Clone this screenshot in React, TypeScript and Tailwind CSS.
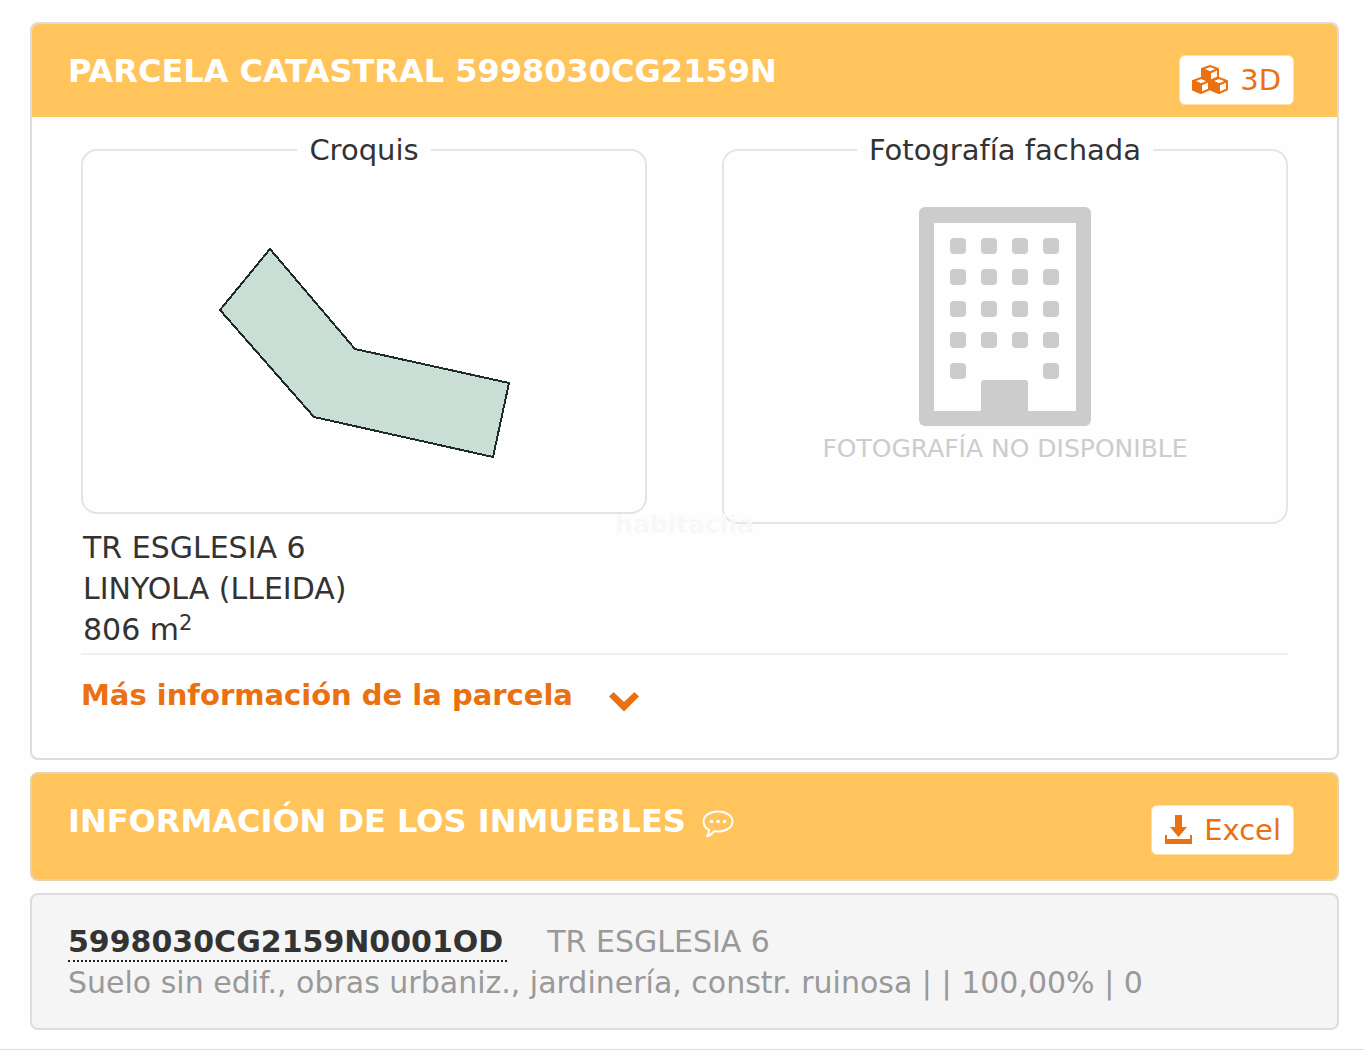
import type { ReactNode } from "react"

const windowColumns = [31, 62, 93, 124]
const windowRows = [31, 62, 94, 125]

function CubeIcon({ x, y }: { x: number; y: number }) {
  return (
    <g transform={`translate(${x} ${y})`} stroke="currentColor" strokeWidth="2" strokeLinejoin="round">
      <path d="M9 1 17 4v8.500L9 16 1 12.500V4Z" fill="white" />
      <path d="M1 4l8 3.500V16L1 12.500Z" fill="currentColor" />
      <path d="M1 4l8 3.500L17 4" fill="none" />
    </g>
  )
}

function CubesIcon() {
  return (
    <svg viewBox="0 0 36 30" className="h-[30px] w-9" aria-hidden="true">
      <CubeIcon x={9} y={0} />
      <CubeIcon x={0} y={12} />
      <CubeIcon x={18} y={12} />
    </svg>
  )
}

function DownloadIcon() {
  return (
    <svg viewBox="0 0 28 30" className="h-[30px] w-7" fill="currentColor" aria-hidden="true">
      <path d="M11 0h7v12h5L14.500 22 6 12h5Z" />
      <path d="M1 20h2v4h23v-4h2v9H1Z" />
    </svg>
  )
}

function CommentIcon() {
  return (
    <svg viewBox="0 0 32 28" className="mt-1 h-7 w-8" fill="none" stroke="currentColor" aria-hidden="true">
      <path
        d="M16 1.500c8.300 0 14.500 4.400 14.500 10S24.300 21.500 16 21.500c-1.300 0-2.600-.1-3.800-.4C10.300 23.600 8 25.500 5 26.200c1.300-1.700 2-3.700 2-6.200-3.500-1.800-5.500-5-5.500-8.500 0-5.600 6.200-10 14.500-10Z"
        strokeWidth="2"
        strokeLinejoin="round"
      />
      <g fill="currentColor" stroke="none">
        <circle cx="9.500" cy="11.500" r="1.800" />
        <circle cx="16" cy="11.500" r="1.800" />
        <circle cx="22.500" cy="11.500" r="1.800" />
      </g>
    </svg>
  )
}

function ChevronIcon() {
  return (
    <svg viewBox="0 0 30 20" className="mt-3 h-5 w-[30px]" fill="currentColor" aria-hidden="true">
      <path d="M4.500 0 15 10 25.500 0 30 4.500 15 19.500 0 4.500Z" />
    </svg>
  )
}

function ParcelSketch() {
  return (
    <svg viewBox="0 0 292 212" className="h-[212px] w-[292px]" role="img" aria-label="Croquis">
      <path
        d="M52 1 137 101 291 135 275 209 96 169 2 62Z"
        fill="#c9dfd5"
        stroke="#1f2b27"
        strokeWidth="2"
        strokeLinejoin="round"
        shapeRendering="crispEdges"
      />
    </svg>
  )
}

function BuildingIcon() {
  return (
    <svg viewBox="0 0 172 219" className="h-[219px] w-[172px]" fill="#cccccc" aria-hidden="true">
      <path
        fillRule="evenodd"
        d="M6 0h160a6 6 0 0 1 6 6v207a6 6 0 0 1-6 6H6a6 6 0 0 1-6-6V6a6 6 0 0 1 6-6ZM15 16v188h47v-28q0-3 3-3h41q3 0 3 3v28h48V16Z"
      />
      {windowRows.map((y) =>
        windowColumns.map((x) => <rect key={`${x}-${y}`} x={x} y={y} width="16" height="16" rx="4" />)
      )}
      <rect x="31" y="156" width="16" height="16" rx="4" />
      <rect x="124" y="156" width="16" height="16" rx="4" />
    </svg>
  )
}

function HeaderButton({ children }: { children: ReactNode }) {
  return (
    <button
      type="button"
      className="flex h-[50px] shrink-0 items-center gap-3 rounded-md border border-[#ffe0ad] bg-white px-3 text-[29px] leading-9 text-[#ea7010]"
    >
      {children}
    </button>
  )
}

function Frame({ title, className, children }: { title: string; className: string; children: ReactNode }) {
  return (
    <fieldset className={`min-w-0 rounded-2xl border-2 border-[#e4e4e4] ${className}`}>
      <legend className="mx-auto px-3 text-[29px] leading-9">{title}</legend>
      {children}
    </fieldset>
  )
}

export default function App() {
  return (
    <div className="border-b border-[#dddddd] bg-[#fefefe] pt-[22px] pr-[25px] pb-[19px] pl-[30px] font-['DejaVu_Sans',sans-serif] text-[30px] leading-[41px] text-[#333333]">
      <main className="flex flex-col gap-3">
        <section className="relative overflow-hidden rounded-lg border-2 border-[#dddddd]">
          <header className="flex h-[93px] items-start justify-between bg-[#ffc55c] pr-[43px] pl-9">
            <h1 className="pt-[27px] text-[32px] font-bold text-white">PARCELA CATASTRAL 5998030CG2159N</h1>
            <div className="pt-[31px]">
              <HeaderButton>
                <CubesIcon />
                3D
              </HeaderButton>
            </div>
          </header>

          <div className="px-[49px] pt-[15px] pb-[42px]">
            <div className="grid grid-cols-2 gap-[75px]">
              <div>
                <Frame title="Croquis" className="h-[382px]">
                  <div className="flex justify-center pt-20">
                    <ParcelSketch />
                  </div>
                </Frame>
                <address className="px-0.5 pt-[13px] not-italic">
                  <p>TR ESGLESIA 6</p>
                  <p>LINYOLA (LLEIDA)</p>
                  <p>
                    806 m<sup className="text-[21px]">2</sup>
                  </p>
                </address>
              </div>
              <Frame title="Fotografía fachada" className="h-[392px]">
                <div className="flex flex-col items-center pt-[39px] text-[25px] text-[#cccccc]">
                  <BuildingIcon />
                  <p className="pt-0.5">FOTOGRAFÍA NO DISPONIBLE</p>
                </div>
              </Frame>
            </div>
            <hr className="mt-[3px] border-t-2 border-[#f0f0f0]" />
            <a href="#parcela" className="mt-5 flex items-center gap-9 text-[29px] font-bold text-[#ea7010]">
              Más información de la parcela
              <ChevronIcon />
            </a>
          </div>
          <span className="absolute top-[480px] left-1/2 -translate-x-1/2 text-[25px] font-bold text-[#f8f8f8]">
            habitaclia
          </span>
        </section>

        <section className="flex h-[109px] items-start justify-between rounded-lg border-2 border-[#e6d3ad] bg-[#ffc55c] pr-[43px] pl-9">
          <h2 className="flex items-center gap-4 pt-[27px] text-[32px] font-bold text-white">
            INFORMACIÓN DE LOS INMUEBLES
            <CommentIcon />
          </h2>
          <div className="pt-[31px]">
            <HeaderButton>
              <DownloadIcon />
              Excel
            </HeaderButton>
          </div>
        </section>

        <section className="h-[137px] rounded-lg border-2 border-[#dddddd] bg-[#f5f5f5] px-9 pt-[25px] text-[#999999]">
          <div className="flex items-start gap-10 leading-[37px]">
            <a href="#inmueble" className="border-b-2 border-dotted border-[#222222] pt-[3px] pr-1 font-bold text-[#333333]">
              5998030CG2159N0001OD
            </a>
            <span className="pt-[3px]">TR ESGLESIA 6</span>
          </div>
          <p>Suelo sin edif., obras urbaniz., jardinería, constr. ruinosa | | 100,00% | 0</p>
        </section>
      </main>
    </div>
  )
}
